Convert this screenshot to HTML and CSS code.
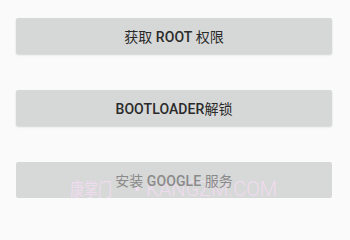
FILE: index.html
```html
<!DOCTYPE html>
<html lang="zh-CN">
<head>
<meta charset="utf-8">
<link rel="stylesheet" href="styles.css">
</head>
<body>
<div class="screen">
  <button class="btn"><span class="label"><span class="cjk">获取</span> ROOT <span class="cjk">权限</span></span></button>
  <button class="btn"><span class="label">BOOTLOADER<span class="cjk">解锁</span></span></button>
  <button class="btn disabled"><span class="label"><span class="cjk">安装</span> GOOGLE <span class="cjk">服务</span></span></button>
  <div class="watermark"><span class="wm-cn"><span class="wm-cn-inner">康掌门</span></span><span class="wm-dot">•</span><span class="wm-en">KANGZM.COM</span></div>
</div>
</body>
</html>
```
FILE: styles.css
```css
html, body {
  margin: 0;
  padding: 0;
  background: #fafafa;
  overflow: hidden;
}
.screen {
  position: relative;
  width: 350px;
  height: 210px;
  display: flex;
  flex-direction: column;
  gap: 36px;
  padding: 18px 18px 0 16px;
  box-sizing: border-box;
}
.btn {
  height: 36px;
  width: 316px;
  flex: none;
  border: none;
  border-radius: 2px;
  background: #d6d7d7;
  color: #2a2a2a;
  font-family: Roboto, "Noto Sans CJK SC", sans-serif;
  font-weight: 500;
  font-size: 14px;
  letter-spacing: 0.1px;
  box-shadow: 0 1px 2px rgba(0,0,0,0.16);
  padding: 0;
}
.label {
  position: relative;
  z-index: 2;
}
.cjk {
  font-family: "Noto Sans CJK SC", sans-serif;
  font-weight: 400;
  letter-spacing: 0;
}
.btn.disabled {
  color: #8a8a8a;
  box-shadow: none;
  background: #d7d8d8;
}
.watermark {
  position: absolute;
  z-index: 1;
  left: 70px;
  top: 178px;
  display: flex;
  align-items: baseline;
  line-height: 20px;
  color: #f0dcef;
  white-space: nowrap;
  pointer-events: none;
}
.wm-cn {
  display: inline-block;
  width: 42px;
  font-family: "Noto Sans CJK SC", sans-serif;
  font-size: 18px;
}
.wm-cn-inner {
  display: inline-block;
  transform: scaleX(0.78);
  transform-origin: left center;
}
.wm-dot {
  font-family: Roboto, sans-serif;
  font-size: 18px;
  margin: 0 6px 0 22px;
}
.wm-en {
  font-family: Roboto, sans-serif;
  font-weight: 300;
  font-size: 20px;
}
```
